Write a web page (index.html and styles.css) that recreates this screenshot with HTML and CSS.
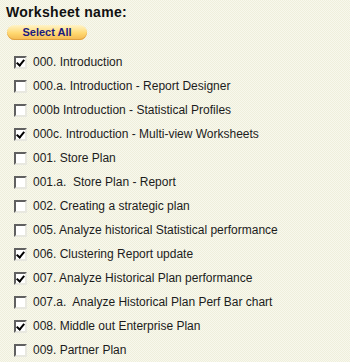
FILE: index.html
```html
<!DOCTYPE html>
<html lang="en">
<head>
    <meta charset="UTF-8">
    <title>Worksheet name</title>
    <link rel="stylesheet" href="styles.css">
</head>
<body>
    <div class="panel">
        <h3 class="title">Worksheet name:</h3>
        <button class="select-btn">Select All</button>

        <ul class="sheet-list">
            <li><span class="cb checked"></span>000. Introduction</li>
            <li><span class="cb"></span>000.a. Introduction - Report Designer</li>
            <li><span class="cb"></span>000b Introduction - Statistical Profiles</li>
            <li><span class="cb checked"></span>000c. Introduction - Multi-view Worksheets</li>
            <li><span class="cb"></span>001. Store Plan</li>
            <li><span class="cb"></span>001.a.&nbsp; Store Plan - Report</li>
            <li><span class="cb"></span>002. Creating a strategic plan</li>
            <li><span class="cb"></span>005. Analyze historical Statistical performance</li>
            <li><span class="cb checked"></span>006. Clustering Report update</li>
            <li><span class="cb checked"></span>007. Analyze Historical Plan performance</li>
            <li><span class="cb"></span>007.a.&nbsp; Analyze Historical Plan Perf Bar chart</li>
            <li><span class="cb checked"></span>008. Middle out Enterprise Plan</li>
            <li><span class="cb"></span>009. Partner Plan</li>
        </ul>
    </div>
</body>
</html>
```

FILE: styles.css
```css
body {
    margin: 0;
    font-family: "Liberation Sans", Arial, sans-serif;
    background-color: #f4f4e4;
    background-image: repeating-conic-gradient(#f8f8ed 0 25%, #efefdc 0 50%);
    background-size: 2px 2px;
}
.panel {
    padding: 4px 0 0 6px;
    height: 358px;
    overflow: hidden;
}
.title {
    margin: 0;
    font-size: 14px;
    font-weight: bold;
    color: #111;
    letter-spacing: 0.3px;
    line-height: 16px;
}
.select-btn {
    display: block;
    margin: 5px 0 0 1px;
    width: 80px;
    height: 15px;
    padding: 0;
    border: none;
    border-radius: 8px;
    background: linear-gradient(#fff4c8, #ffd870 55%, #f3b850);
    box-shadow: inset 0 -1px 0 #e0a040;
    color: #1a1a80;
    font-family: "Liberation Sans", Arial, sans-serif;
    font-weight: bold;
    font-size: 11px;
    line-height: 15px;
}
.sheet-list {
    list-style: none;
    margin: 10px 0 0 8px;
    padding: 0;
}
.sheet-list li {
    display: flex;
    align-items: center;
    height: 24px;
    font-size: 12px;
    color: #1c1c1c;
}
.cb {
    width: 9px;
    height: 9px;
    margin-right: 6px;
    background: #fff;
    border-top: 2px solid #606060;
    border-left: 2px solid #606060;
    border-bottom: 2px solid #e8e8e0;
    border-right: 2px solid #e8e8e0;
    position: relative;
}
.cb.checked::after {
    content: "";
    position: absolute;
    left: 2px;
    top: 0px;
    width: 3px;
    height: 6px;
    border-right: 2px solid #000;
    border-bottom: 2px solid #000;
    transform: rotate(40deg);
}
```
